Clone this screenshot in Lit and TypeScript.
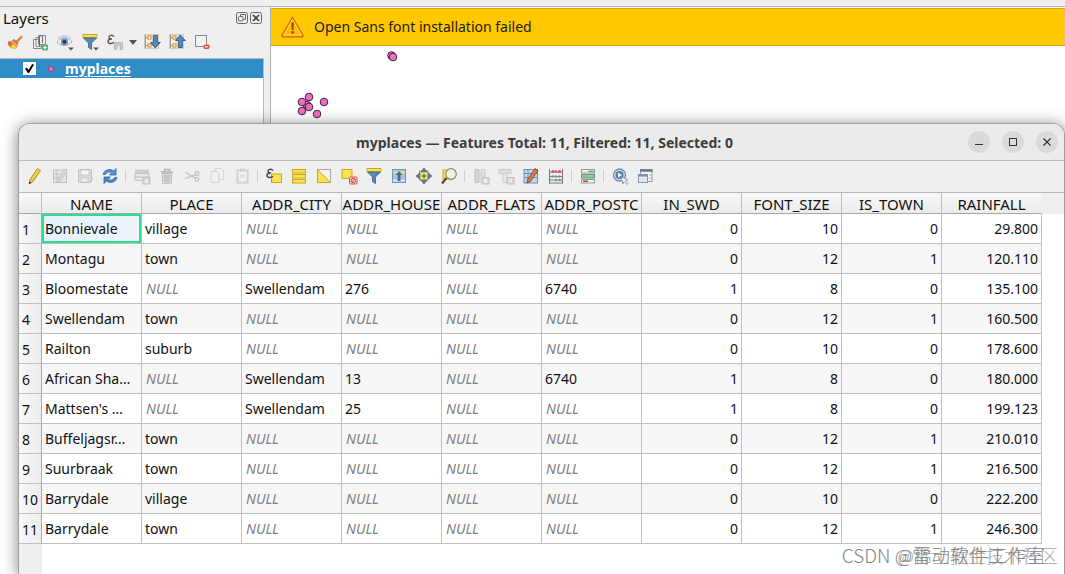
import { LitElement, html, css, svg, nothing, TemplateResult } from "lit";
import { customElement, property } from "lit/decorators.js";

type Icon = TemplateResult;
interface Tool {
  label: string;
  icon: Icon;
  disabled?: boolean;
}

const Y = "#fbe34d";
const YB = "#c9a91c";
const B = "#5b88b8";
const BD = "#34618f";
const G = "#c2c2c2";

const funnel = svg`<path d="M2 1.5h14v3H2z" fill=${Y} stroke=${YB}/><path d="M2.5 5h13l-5 5v6.5l-3-2V10z" fill=${B} stroke=${BD} stroke-width=".8"/>`;
const epsilon = (c: string) => svg`<path d="M8 2.600C6.500.6 3 1 3 3.200c0 1.300 1.400 1.900 2.800 1.800C3.800 5 2 5.700 2 7.500c0 2.400 4.200 2.700 6 .8" fill="none" stroke=${c} stroke-width="1.400"/>`;
const drop = svg`<path d="M12 14.500h6l-3 3z" fill="#555"/>`;
const tree = svg`<rect x="1.500" y="1.500" width="14" height="14" fill="none" stroke="#c9c3b5" stroke-width=".8"/><path d="M2.500 2v13M2.500 4.500h3M2.500 12.500h3" stroke="#999" fill="none"/><rect x="5" y="3" width="3" height="3" fill="#fff" stroke="#e89a2b" stroke-width="1.300"/><rect x="5" y="11" width="3" height="3" fill="#fff" stroke="#e89a2b" stroke-width="1.300"/>`;
const pages = svg`<path d="M3 4.500h6l2 2v9H3z" fill="#f0f0f0" stroke=${G}/><path d="M7 1.500h6l2.500 2.500v9H11V6.500L9 4.500H7z" fill="#f0f0f0" stroke=${G}/>`;

const layerTools: (Tool | "arrow")[] = [
  {
    label: "Open layer styling",
    icon: svg`<path d="M2 8.500l4-1 6 5-2 3.500c-3 .5-6.500-1-8-4z" fill="#e8a33a"/><path d="M2 8.500l3 .5 1 3-3 .5z" fill="#d8574a"/><path d="M5.500 12.500l3-.5 2 3.500-3 .5z" fill="#f1d94c"/><path d="M6 7.200l2-1.200 4.500 4-1 2z" fill="#d9665a"/><path d="M9.500 8.500L15.500 3l1 1-5.500 6z" fill="#d98a2c" stroke="#b9772c" stroke-width=".6"/>`,
  },
  {
    label: "Add group",
    icon: svg`<path d="M2.500 6.500h8v9h-8z" fill="none" stroke="#888"/><path d="M5 4.500h8v9H5z" fill="none" stroke="#888"/><path d="M7.500 2.500h7v9h-7z" fill="#efefef" stroke="#888"/><path d="M8.500 13V3.500a2 2 0 0 1 3 0V10" fill="none" stroke="#666"/><rect x="11" y="11.500" width="6" height="6" rx="1" fill="#5cb574"/><path d="M14 12.700v3.600M12.200 14.500h3.600" stroke="#fff" stroke-width="1.200"/>`,
  },
  {
    label: "Manage map themes",
    icon: svg`<path d="M1 9c4-5.500 11-5.500 15 0-4 4.500-11 4.500-15 0z" fill="#f6f6f6" stroke="#aaa"/><path d="M2 5.500c4-3.500 9-3.500 13 0" fill="none" stroke="#bbb"/><circle cx="8.500" cy="8.800" r="3.700" fill="#7796bd"/><circle cx="8.500" cy="8.800" r="1.900" fill="#1f3555"/>${drop}`,
  },
  { label: "Filter legend", icon: svg`${funnel}${drop}` },
  {
    label: "Filter legend by expression",
    icon: svg`<g transform="translate(0 1)">${epsilon("#555")}</g><path d="M8 9.500h8.500v7H14V12h-3v4.500H8.500z" fill="#c9c9c9" stroke="#aaa" stroke-width=".7"/>`,
  },
  "arrow",
  {
    label: "Expand all",
    icon: svg`${tree}<path d="M10.300 2.500h4v7h3L12.300 15 7.500 9.500h2.800z" fill=${B} stroke=${BD}/>`,
  },
  {
    label: "Collapse all",
    icon: svg`${tree}<path d="M10.300 14.500h4v-7h3L12.300 2 7.500 7.500h2.800z" fill=${B} stroke=${BD}/>`,
  },
  {
    label: "Remove layer",
    icon: svg`<rect x="2.500" y="2.500" width="11" height="11" fill="#f2f2f2" stroke="#888"/><rect x="10.500" y="11.500" width="6" height="4.500" rx="1.500" fill="#e5534f"/><path d="M12 13.750h3" stroke="#fff" stroke-width="1.200"/>`,
  },
];

const tableTools: (Tool | "sep")[] = [
  {
    label: "Toggle editing mode",
    icon: svg`<path d="M4 12.500L11.500 1.500l3 2L7 14.500 3 17z" fill="#f0cf3f" stroke="#9b8326" stroke-width=".9"/><path d="M3 17l.5-2.500L5.500 16z" fill="#333"/><path d="M11.500 1.500l3 2-.8 1.200-3-2z" fill="#d9b98c"/>`,
  },
  {
    label: "Toggle multi edit mode",
    disabled: true,
    icon: svg`<rect x="2.500" y="3" width="13" height="12.500" fill="#e6e6e6" stroke=${G}/><path d="M3 7h8M3 11h6M6 3v12" stroke=${G}/><path d="M6 14L14 2l2 1.500L8.500 15z" fill="#dcdcdc" stroke=${G}/>`,
  },
  {
    label: "Save edits",
    disabled: true,
    icon: svg`<rect x="2.500" y="2.500" width="13" height="13" rx="1" fill="#dadada" stroke=${G}/><rect x="5" y="3" width="8" height="5" fill="#f3f3f3" stroke=${G} stroke-width=".7"/><rect x="5" y="11" width="7" height="4" fill="#eee" stroke=${G} stroke-width=".7"/><path d="M12 16l5-5" stroke="#ccc" stroke-width="1.500"/>`,
  },
  {
    label: "Reload the table",
    icon: svg`<path d="M2 7.500C3 3 8.500 1 12.500 4L15 1.500V8H8.500l2.200-2.200C8.500 4.200 5.500 5 4.500 7.500z" fill="#5b93d3" stroke="#2f66a8" stroke-width=".8"/><path d="M16 10.500c-1 4.500-6.500 6.500-10.500 3.500L3 16.500V10h6.500l-2.200 2.200c2.200 1.600 5.200.8 6.200-1.700z" fill="#4a83c6" stroke="#2f66a8" stroke-width=".8"/>`,
  },
  "sep",
  {
    label: "Add feature",
    disabled: true,
    icon: svg`<path d="M2 2.500h14v4H2z" fill="#cfcfcf"/><path d="M2 6.500h14v7H2zM2 10h14" fill="#e6e6e6" stroke=${G}/><rect x="10" y="10.500" width="7" height="6.500" fill="#d6d6d6" stroke=${G}/><path d="M13.500 12v4M11.500 14h4" stroke="#f8f8f8"/>`,
  },
  {
    label: "Delete selected features",
    disabled: true,
    icon: svg`<path d="M3 5h12M6.500 4.500V2.500h5v2" fill="none" stroke="#b4b4b4" stroke-width="1.500"/><path d="M4 6.500h10l-.8 10H4.800z" fill="#d8d8d8" stroke=${G}/><path d="M7 8v7M9 8v7M11 8v7" stroke="#b4b4b4"/>`,
  },
  {
    label: "Cut",
    disabled: true,
    icon: svg`<path d="M2 5l10 6M2 11.500L12 8" stroke="#bdbdbd" stroke-width="1.200"/><circle cx="14" cy="6.500" r="1.800" fill="none" stroke="#bdbdbd" stroke-width="1.200"/><circle cx="14" cy="12.300" r="1.800" fill="none" stroke="#bdbdbd" stroke-width="1.200"/>`,
  },
  { label: "Copy", disabled: true, icon: svg`<g opacity=".65">${pages}</g>` },
  {
    label: "Paste",
    disabled: true,
    icon: svg`<g opacity=".8"><rect x="4" y="3" width="11" height="13" fill="#ddd" stroke=${G}/><rect x="6" y="5" width="7" height="9" fill="#f4f4f4"/><rect x="7" y="1.500" width="5" height="3" fill="#ccc"/><path d="M7 8h5M7 10h5" stroke="#ccc"/></g>`,
  },
  "sep",
  {
    label: "Select by expression",
    icon: svg`<rect x="6.500" y="7" width="10" height="8.500" fill=${Y} stroke=${YB}/><g transform="translate(0 1)">${epsilon("#4b3a63")}</g>`,
  },
  {
    label: "Select all",
    icon: svg`<g fill=${Y} stroke=${YB}><rect x="2.500" y="2.500" width="13" height="3.500"/><rect x="2.500" y="7.500" width="13" height="3.500"/><rect x="2.500" y="12.500" width="13" height="3.500"/></g>`,
  },
  {
    label: "Invert selection",
    icon: svg`<rect x="2.500" y="2.500" width="13" height="13" fill="#f3f3f3" stroke="#aaa"/><path d="M2.500 2.500v13h13z" fill=${Y} stroke=${YB}/>`,
  },
  {
    label: "Deselect all",
    icon: svg`<rect x="2" y="2.500" width="10" height="9" fill=${Y} stroke=${YB}/><rect x="9.500" y="10" width="7.500" height="7" rx="1" fill="#f5d5d3" stroke="#d9534f"/><circle cx="13.250" cy="13.500" r="2.200" fill="none" stroke="#d03f3b"/><path d="M11.800 15l3-3" stroke="#d03f3b"/>`,
  },
  { label: "Filter selected features", icon: funnel },
  {
    label: "Move selection to top",
    icon: svg`<rect x="2.500" y="2.500" width="13" height="13" fill="#a9c3de" stroke="#6f94bb"/><path d="M3 5.500h12" stroke="#f3e26a" stroke-width="2"/><path d="M3 13.500h12" stroke="#eef4fa" stroke-width="1.500"/><path d="M9 4l3.500 4h-2v6h-3V8h-2z" fill="#416f9f"/>`,
  },
  {
    label: "Pan map to selected rows",
    icon: svg`<rect x="4.500" y="4" width="8.500" height="9" fill=${Y} stroke=${YB}/><g fill="#527fae" stroke=${BD} stroke-width=".5"><path d="M9 .8l3.300 4.200H5.700z"/><path d="M9 17.200l3.300-4.200H5.700z"/><path d="M.8 9L5 5.700v6.600z"/><path d="M17.200 9L13 5.700v6.600z"/><path d="M9 7l2 2-2 2-2-2z"/></g>`,
  },
  {
    label: "Zoom map to selected rows",
    icon: svg`<rect x="3" y="3" width="8" height="9" fill=${Y} stroke=${YB}/><path d="M6.500 11L2 16.500" stroke="#444" stroke-width="2"/><circle cx="11" cy="7" r="5.300" fill="#f3f3dc" stroke="#888" stroke-width="1.200"/>`,
  },
  "sep",
  {
    label: "New field",
    disabled: true,
    icon: svg`<path d="M3 2.500h4v13H3z" fill="#d5d5d5" stroke=${G}/><path d="M9 2.500h4v13H9zM9 6h4M9 9h4" fill="#e8e8e8" stroke="#ccc"/><rect x="10" y="10.500" width="7" height="6.500" fill="#d6d6d6" stroke=${G}/><path d="M13.500 12v4M11.500 14h4" stroke="#fff"/>`,
  },
  {
    label: "Delete field",
    disabled: true,
    icon: svg`<path d="M2 2.500h12v4H2z" fill="#ddd" stroke="#ccc"/><path d="M6 6.500h4v9H6z" fill="#e8e8e8" stroke="#ccc"/><rect x="10" y="10.500" width="7" height="6.500" fill="#d6d6d6" stroke=${G}/><path d="M12 12l3 3.500M15 12l-3 3.500" stroke="#fff"/>`,
  },
  {
    label: "Organize columns",
    icon: svg`<rect x="2" y="2.500" width="13.500" height="13.500" fill="#c6d8ec" stroke="#6c8fb6"/><path d="M2 6.500h13M2 10.500h13M6 3v13" stroke="#6c8fb6"/><path d="M5.500 12.500L13 1.500l3 2-7.500 11-3.500 1.500z" fill="#d97b3f" stroke="#7a3f1a" stroke-width=".8"/>`,
  },
  {
    label: "Open field calculator",
    icon: svg`<path d="M2.500 2v14.500M15.500 2v14.500M2 5h14M2 9.500h14M2 13h14M2 16h14" stroke="#777"/><g fill="#d85555"><circle cx="6" cy="4.500" r="1.600"/><circle cx="9" cy="4.500" r="1.200"/><circle cx="12.500" cy="4.500" r="1.600"/></g><g fill="#6fa57b"><circle cx="5.500" cy="9.500" r="1.300"/><circle cx="8.500" cy="9.500" r="1.300"/></g><g fill="#888"><circle cx="9" cy="13" r="1.200"/><circle cx="12.500" cy="13" r="1.200"/><circle cx="12.500" cy="9.500" r="1.200"/></g>`,
  },
  "sep",
  {
    label: "Conditional formatting",
    icon: svg`<rect x="2.500" y="2.500" width="13" height="3.500" fill="#eee" stroke="#999"/><rect x="2.500" y="7.500" width="13" height="3.500" fill="#8ec79b" stroke="#6f9a78"/><rect x="2.500" y="12.500" width="13" height="3.500" fill="#f6f6f6" stroke="#999"/><path d="M4 14.250h5" stroke="#c94040" stroke-width="1.500"/><path d="M9.500 4.250h5" stroke="#666"/>`,
  },
  "sep",
  {
    label: "Dock attribute table",
    icon: svg`<circle cx="8.500" cy="8" r="6" fill="#cfdcea" stroke="#7c8ea3" stroke-width="1.300"/><circle cx="8.500" cy="8" r="4" fill="#4e7fb3"/><path d="M7 5.500l4 2.500-4 2.500z" fill="#fff"/><path d="M10 10l7 2.500-2.500 1 2.500 3-1 1-3-3-1 2.500z" fill="#f8f8f8" stroke="#888" stroke-width=".8"/>`,
  },
  {
    label: "Actions",
    icon: svg`<rect x="4.500" y="2.500" width="11.500" height="12" fill="#f4f4f4" stroke="#999"/><path d="M4 3.500h12.500" stroke="#777" stroke-width="2.500"/><rect x="2.500" y="7.500" width="9" height="8" fill="#dfe8f1" stroke="#8d9cae"/><path d="M2 8.500h10" stroke="#7d8ea1" stroke-width="2"/><path d="M13 8h2M13 11h2" stroke="#aaa"/>`,
  },
];

const columns = ["NAME", "PLACE", "ADDR_CITY", "ADDR_HOUSE", "ADDR_FLATS", "ADDR_POSTC", "IN_SWD", "FONT_SIZE", "IS_TOWN", "RAINFALL"];
const FIRST_NUMERIC = 6;

const rows: (string | null)[][] = [
  ["Bonnievale", "village", null, null, null, null, "0", "10", "0", "29.800"],
  ["Montagu", "town", null, null, null, null, "0", "12", "1", "120.110"],
  ["Bloomestate", null, "Swellendam", "276", null, "6740", "1", "8", "0", "135.100"],
  ["Swellendam", "town", null, null, null, null, "0", "12", "1", "160.500"],
  ["Railton", "suburb", null, null, null, null, "0", "10", "0", "178.600"],
  ["African Sha…", null, "Swellendam", "13", null, "6740", "1", "8", "0", "180.000"],
  ["Mattsen's …", null, "Swellendam", "25", null, null, "1", "8", "0", "199.123"],
  ["Buffeljagsr…", "town", null, null, null, null, "0", "12", "1", "210.010"],
  ["Suurbraak", "town", null, null, null, null, "0", "12", "1", "216.500"],
  ["Barrydale", "village", null, null, null, null, "0", "10", "0", "222.200"],
  ["Barrydale", "town", null, null, null, null, "0", "12", "1", "246.300"],
];

const buttonReset = css`
  * {
    box-sizing: border-box;
  }
  button {
    border: 0;
    padding: 0;
    background: none;
    color: inherit;
    font: inherit;
    display: grid;
    place-items: center;
  }
`;

@customElement("tool-bar")
export class ToolBar extends LitElement {
  @property({ attribute: false }) items: (Tool | "sep" | "arrow")[] = [];

  static styles = [
    buttonReset,
    css`
      :host {
        display: flex;
        align-items: center;
      }
      .tool {
        width: 25px;
        height: 25px;
      }
      .tool svg {
        width: 18px;
        height: 18px;
      }
      .more {
        width: 12px;
        height: 25px;
      }
      .sep {
        width: 7px;
        height: 12px;
        display: flex;
        justify-content: center;
      }
      .sep::before {
        content: "";
        width: 1px;
        background: #cfcfcf;
      }
    `,
  ];

  render() {
    return this.items.map((item) => {
      if (item === "sep") return html`<span class="sep"></span>`;
      if (item === "arrow")
        return html`<button class="more" aria-label="More filters">
          <svg width="8" height="5" viewBox="0 0 8 5"><path d="M0 0h8L4 5z" fill="#555" /></svg>
        </button>`;
      return html`<button class="tool" aria-label=${item.label} ?disabled=${item.disabled}>
        <svg viewBox="0 0 18 18">${item.icon}</svg>
      </button>`;
    });
  }
}

@customElement("layers-panel")
export class LayersPanel extends LitElement {
  static styles = [
    buttonReset,
    css`
      :host {
        display: flex;
        flex-direction: column;
        width: 264px;
      }
      header {
        display: flex;
        align-items: center;
        gap: 2px;
        height: 22px;
        padding: 0 2px 0 3px;
      }
      h2 {
        flex: 1;
        margin: 0;
        font-size: 15px;
        font-weight: 400;
      }
      tool-bar {
        height: 29px;
        padding: 0 0 3px 2px;
      }
      .tree {
        flex: 1;
        background: #fff;
        border: 1px solid #b9b9b9;
        border-width: 1px 1px 0 0;
      }
      .layer {
        display: flex;
        align-items: center;
        height: 19px;
        padding-left: 23px;
        background: #308cc6;
        color: #fff;
      }
      input {
        appearance: none;
        display: grid;
        place-items: center;
        margin: 0;
        width: 13px;
        height: 13px;
        background: #fff;
      }
      input:checked::before {
        content: "";
        width: 9px;
        height: 9px;
        background: #000;
        clip-path: polygon(0 50%, 22% 42%, 38% 68%, 80% 0, 100% 8%, 44% 100%, 32% 100%);
      }
      .layer svg {
        margin: 0 10px 0 11px;
      }
      label {
        font-weight: 700;
        font-size: 14px;
        line-height: 18px;
        text-decoration: underline;
        text-decoration-thickness: 1px;
        text-underline-offset: 2px;
      }
    `,
  ];

  render() {
    return html`
      <header>
        <h2>Layers</h2>
        <button aria-label="Float panel">
          <svg width="12" height="12" viewBox="0 0 12 12" fill="none" stroke="#666">
            <rect x=".5" y=".5" width="11" height="11" rx="2" />
            <rect x="2.500" y="4.500" width="4.500" height="4.500" rx="1" />
            <path d="M4.500 4V2.500h5v5H7.500" />
          </svg>
        </button>
        <button aria-label="Close panel">
          <svg width="12" height="12" viewBox="0 0 12 12" fill="none" stroke="#666">
            <rect x=".5" y=".5" width="11" height="11" rx="2" />
            <path d="M3 3l6 6M9 3l-6 6" stroke="#444" stroke-width="1.700" />
          </svg>
        </button>
      </header>
      <tool-bar .items=${layerTools}></tool-bar>
      <div class="tree">
        <div class="layer">
          <input type="checkbox" id="places" checked />
          <svg width="8" height="8" viewBox="0 0 8 8"><circle cx="4" cy="4" r="2.700" fill="#e86fc0" stroke="#7b4a86" /></svg>
          <label for="places">myplaces</label>
        </div>
      </div>
    `;
  }
}

@customElement("map-view")
export class MapView extends LitElement {
  static styles = css`
    :host {
      display: flex;
      flex-direction: column;
      background: #fff;
      border-left: 1px solid #b0b0b0;
      padding-top: 1px;
    }
    .message {
      display: flex;
      align-items: center;
      gap: 10px;
      box-sizing: border-box;
      height: 38px;
      padding-left: 10px;
      background: #ffc800;
      border: solid #d6aa0c;
      border-width: 1px 0;
      color: #1b1b1b;
      font-size: 14px;
    }
    .canvas {
      flex: 1;
    }
  `;

  render() {
    const points = [[120.500, 9.500], [122, 11], [36, 59], [38, 51], [31, 56], [53, 56], [38, 61], [31, 65], [46, 68]];
    return html`
      <div class="message" role="alert">
        <svg width="23" height="22" viewBox="0 0 23 22">
          <path d="M11.500 1.200L1 19.300q-.4 1.500 1 1.500h19q1.400 0 1-1.500z" fill="#ffb900" stroke="#d2640f" stroke-width="1.200" stroke-linejoin="round" />
          <path d="M11.500 3.500L3 18.800h17z" fill="none" stroke="#ffd75e" />
          <path d="M10.200 6.500h2.800l-.6 7.500h-1.600z" fill="#a8500f" />
          <circle cx="11.600" cy="16.500" r="1.400" fill="#a8500f" />
        </svg>
        <span>Open Sans font installation failed</span>
      </div>
      <svg class="canvas" width="100%">
        ${points.map(([x, y]) => svg`<circle cx=${x} cy=${y} r="3.800" fill="#f06fc4" stroke="#3c2440"/>`)}
      </svg>
    `;
  }
}

@customElement("attribute-table")
export class AttributeTable extends LitElement {
  static styles = [
    buttonReset,
    css`
      :host {
        display: flex;
        flex-direction: column;
        overflow: hidden;
        background: #fff;
        border: 1px solid #a0a0a0;
        border-bottom: 0;
        border-radius: 12px 12px 0 0;
        box-shadow: 0 2px 16px rgba(0, 0, 0, 0.5);
      }
      .title {
        display: grid;
        grid-template-columns: 1fr auto 1fr;
        align-items: center;
        height: 37px;
        padding: 0 6px 0 12px;
        background: #ebebeb;
        border-bottom: 1px solid #bdbdbd;
        color: #3d3d3d;
      }
      h1 {
        grid-column: 2;
        margin: 0;
        font-size: 14px;
        line-height: 20px;
        padding-top: 2px;
        font-weight: 700;
        white-space: nowrap;
      }
      .controls {
        display: flex;
        justify-content: flex-end;
        gap: 12px;
      }
      .controls button {
        width: 22px;
        height: 22px;
        border-radius: 50%;
        background: #dadada;
      }
      tool-bar {
        height: 31px;
        padding: 0 0 1px 3px;
        background: #efefef;
      }
      .grid {
        flex: 1;
        overflow: hidden;
        border-top: 1px solid #b9b9b9;
        background: linear-gradient(#efefef, #efefef) 0 0 / 23px 100% no-repeat,
          linear-gradient(#efefef, #efefef) 0 0 / 100% 21px no-repeat, #fff;
      }
      table {
        width: 1023px;
        table-layout: fixed;
        border-collapse: separate;
        border-spacing: 0;
        font-size: 14px;
        line-height: 20px;
      }
      .index {
        width: 23px;
      }
      th,
      td {
        padding: 0 3px;
        white-space: nowrap;
        border: solid #c0c0c0;
        border-width: 0 1px 1px 0;
        text-align: left;
        font-weight: 400;
      }
      thead th {
        height: 21px;
        padding: 2px 0 0;
        font-size: 15px;
        line-height: 18px;
        text-align: center;
        background: linear-gradient(#f9f9f9, #ebebeb);
        border-bottom-color: #a8a8a8;
      }
      thead th:last-child {
        border-right-color: #efefef;
      }
      tbody th {
        height: 30px;
        padding: 2px 0 0 3px;
        background: linear-gradient(90deg, #f7f7f7, #ededed);
        border-right-color: #a8a8a8;
      }
      tbody tr:nth-child(even) td {
        background: #f7f7f7;
      }
      td.num {
        text-align: right;
      }
      td.null {
        padding-left: 4px;
        color: #808080;
        font-style: italic;
      }
      td.current {
        background: linear-gradient(90deg, #e4f1fb, #eef6fc);
        box-shadow: inset 0 0 0 2px #2adf8b;
      }
    `,
  ];

  private cell(value: string | null, row: number, col: number) {
    if (value === null) return html`<td class="null">NULL</td>`;
    const cls = col >= FIRST_NUMERIC ? "num" : row === 0 && col === 0 ? "current" : nothing;
    return html`<td class=${cls}>${value}</td>`;
  }

  render() {
    return html`
      <div class="title">
        <h1>myplaces — Features Total: 11, Filtered: 11, Selected: 0</h1>
        <div class="controls">
          <button aria-label="Minimize"><svg width="10" height="10"><path d="M1 7.500h8" stroke="#333" /></svg></button>
          <button aria-label="Maximize"><svg width="10" height="10"><rect x="1.500" y="1.500" width="7" height="7" fill="none" stroke="#333" /></svg></button>
          <button aria-label="Close"><svg width="10" height="10"><path d="M1.500 1.500l7 7M8.500 1.500l-7 7" stroke="#333" stroke-width="1.200" /></svg></button>
        </div>
      </div>
      <tool-bar .items=${tableTools}></tool-bar>
      <div class="grid">
        <table>
          <thead>
            <tr>
              <th class="index"></th>
              ${columns.map((c) => html`<th scope="col">${c}</th>`)}
            </tr>
          </thead>
          <tbody>
            ${rows.map(
              (r, i) => html`<tr>
                <th scope="row">${i + 1}</th>
                ${r.map((v, j) => this.cell(v, i, j))}
              </tr>`
            )}
          </tbody>
        </table>
      </div>
    `;
  }
}

@customElement("app-root")
export class AppRoot extends LitElement {
  static styles = css`
    :host {
      display: flex;
      flex-direction: column;
      position: relative;
      height: 100vh;
      overflow: hidden;
      background: #efefef;
      color: #111;
      font: 14px/20px "Noto Sans", "Open Sans", sans-serif;
    }
    .strip {
      height: 7px;
      box-sizing: border-box;
      border-bottom: 1px solid #b9b9b9;
    }
    .workspace {
      flex: 1;
      display: flex;
      gap: 6px;
    }
    map-view {
      flex: 1;
    }
    attribute-table {
      position: absolute;
      inset: 123px 0 0 18px;
    }
    .mark {
      position: absolute;
      bottom: 7px;
      font-family: "Noto Sans CJK SC", sans-serif;
      font-weight: 300;
      line-height: 24px;
      white-space: nowrap;
    }
    .community {
      right: 7px;
      font-size: 18px;
      color: #a6a6a6;
    }
    .author {
      right: 20px;
      font-size: 19px;
      color: #858585;
    }
  `;

  render() {
    return html`
      <div class="strip"></div>
      <div class="workspace">
        <layers-panel></layers-panel>
        <map-view></map-view>
      </div>
      <attribute-table></attribute-table>
      <span class="mark community">@稀土掘金技术社区</span>
      <span class="mark author">CSDN @雷动软件工作室</span>
    `;
  }
}
